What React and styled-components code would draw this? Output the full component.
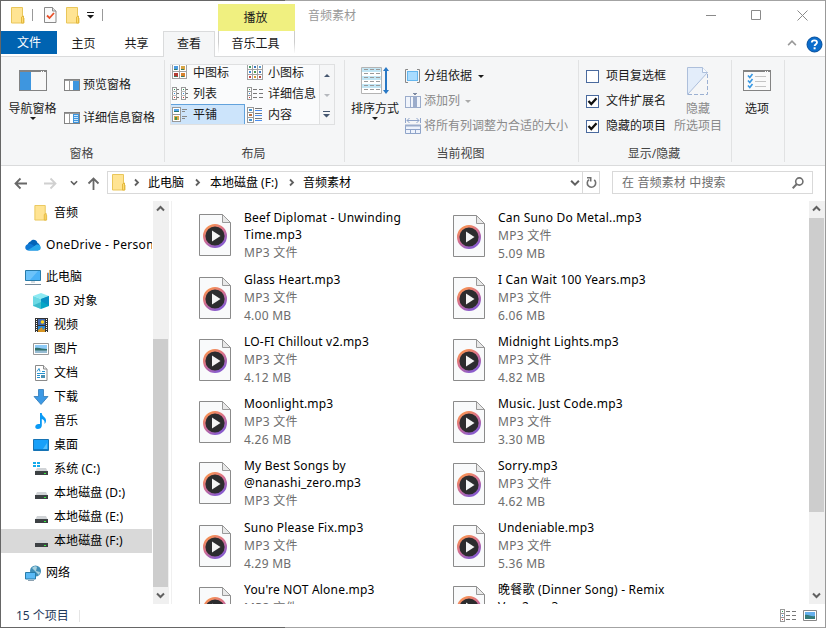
import React from 'react';
import styled, { createGlobalStyle } from 'styled-components';

const GlobalStyle = createGlobalStyle`
  * {
    box-sizing: border-box;
  }
  body {
    margin: 0;
    overflow: hidden;
    font-family: 'Noto Sans', 'Noto Sans CJK SC', sans-serif;
    font-size: 12px;
    line-height: 16px;
    color: #1a1a1a;
  }
  svg {
    display: block;
    flex: none;
  }
`;

const Window = styled.div`
  width: 826px;
  height: 628px;
  display: flex;
  flex-direction: column;
  padding: 1px 0;
  border: 1px solid #999;
  border-left-color: #666;
  border-width: 0 1px;
  background:
    linear-gradient(90deg, #666 284px, #a3a3a3 284px) top / 100% 1px no-repeat,
    linear-gradient(90deg, #666 284px, #a3a3a3 284px) bottom / 100% 1px no-repeat,
    #fff;
  white-space: nowrap;
`;

const TitleBar = styled.div`
  height: 30px;
  flex: none;
  display: flex;
`;

const QuickAccess = styled.div`
  width: 217px;
  height: 28px;
  padding-left: 10px;
  display: flex;
  align-items: center;
`;

const QuickSeparator = styled.div`
  width: 1px;
  height: 12px;
  margin: 0 ${props => props.$right || 0}px 0 7px;
  background: #999;
`;

const QuickItem = styled.div`
  margin-right: ${props => props.$right}px;
`;

const ContextTitle = styled.div`
  width: 77px;
  height: 27px;
  margin-top: 3px;
  padding-right: 2px;
  background: #f0f080;
  text-align: center;
  line-height: 27px;
`;

const Title = styled.div`
  flex: 1;
  padding-left: 13px;
  line-height: 29px;
  color: #999;
`;

const WindowButtons = styled.div`
  display: flex;
  align-items: flex-start;
  gap: 35px;
  padding: 9px 17px 0 0;
`;

const TabRow = styled.div`
  height: 26px;
  flex: none;
  display: flex;
  line-height: 25px;
  box-shadow: inset 0 -1px #dadbdc;
`;

const FileTab = styled.div`
  width: 56px;
  height: 23px;
  background: #0063b1;
  color: #fff;
  text-align: center;
  line-height: 24px;
`;

const Tab = styled.div`
  width: 53px;
  text-align: center;
`;

const ActiveTab = styled.div`
  width: 52px;
  border: 1px solid #dadbdc;
  border-bottom: 0;
  background: #f5f6f7;
  text-align: center;
  line-height: 24px;
`;

const ContextTab = styled.div`
  width: 77px;
  height: 22px;
  margin-left: 3px;
  padding-right: 2px;
  text-align: center;
  line-height: 25px;
  border: 1px solid;
  border-width: 0 1px;
  border-image: linear-gradient(#ccc, #ccc 50%, #fff) 1;
`;

const TabTools = styled.div`
  margin-left: auto;
  padding-right: 2px;
  display: flex;
  align-items: center;
  gap: 9px;
`;

const Ribbon = styled.div`
  height: 109px;
  flex: none;
  display: flex;
  background: #f5f6f7;
  border-bottom: 1px solid #dadbdc;
`;

const Group = styled.div`
  width: ${props => props.$width}px;
  height: 102px;
  margin-top: 3px;
  border-right: 1px solid #e1e2e3;
  display: flex;
  flex-direction: column;
`;

const GroupBody = styled.div`
  height: 85px;
  display: flex;
`;

const GroupLabel = styled.div`
  padding-right: 2px;
  text-align: center;
  line-height: 17px;
  color: #444;
`;

const BigButton = styled.div`
  width: ${props => props.$width}px;
  padding-top: ${props => props.$top}px;
  display: flex;
  flex-direction: column;
  align-items: center;
  text-align: center;
  color: ${props => (props.$disabled ? '#8a8a8a' : '#1a1a1a')};
`;

const BigLabel = styled.div`
  margin-top: ${props => props.$gap}px;
  line-height: 17px;
`;

const SmallButtons = styled.div`
  display: flex;
  flex-direction: column;
  padding: ${props => props.$padding};
  gap: ${props => props.$gap}px;
`;

const SmallButton = styled.div`
  height: 16px;
  display: flex;
  align-items: center;
  gap: ${props => props.$gap || 3}px;
  color: ${props => (props.$disabled ? '#8a8a8a' : '#1a1a1a')};
`;

const MenuMark = styled.span`
  margin-left: 2px;
`;

const CheckBox = styled.div`
  width: 13px;
  height: 13px;
  border: 1px solid #4a6a9e;
  background: #fff;
`;

const Gallery = styled.div`
  width: 165px;
  height: 61px;
  margin: 4px 0 0 5px;
  border: 1px solid #dfe0e1;
  background: #fafbfc;
  display: flex;
  overflow: hidden;
`;

const GalleryGrid = styled.div`
  width: 149px;
  margin-left: -1px;
  margin-bottom: -1px;
  display: grid;
  grid-template-columns: 75px 75px;
  grid-auto-rows: 21px;
  align-content: end;
`;

const GalleryItem = styled.div`
  display: flex;
  align-items: center;
  gap: 5px;
  padding-left: 1px;
  border: 1px solid ${props => (props.$selected ? '#62a2dc' : 'transparent')};
  background: ${props => (props.$selected ? '#cce4fb' : 'transparent')};
`;

const GalleryScroll = styled.div`
  flex: 1;
  border-left: 1px solid #dfe0e1;
  display: grid;
  grid-template-rows: 20px 20px 19px;
  place-items: center;
  background: #f5f6f7;
`;

const NavBar = styled.div`
  height: 35px;
  flex: none;
  display: flex;
  padding-top: 5px;
`;

const NavButtons = styled.div`
  width: 106px;
  height: 24px;
  padding-left: 13px;
  display: grid;
  grid-template-columns: 30px 26px 17px 13px;
  align-items: center;
`;

const AddressBar = styled.div`
  width: 493px;
  height: 23px;
  border: 1px solid #d9d9d9;
  display: flex;
  align-items: center;
  padding-left: 4px;
`;

const Crumb = styled.span`
  width: ${props => props.$width}px;
  color: #000;
`;

const CrumbArrow = styled.div`
  width: ${props => props.$width}px;
  padding-left: ${props => props.$left}px;
`;

const AddressTools = styled.div`
  margin-left: auto;
  height: 100%;
  display: flex;
  align-items: center;
`;

const Refresh = styled.div`
  width: 17px;
  height: 100%;
  margin-left: 2px;
  border-left: 1px solid #d9d9d9;
  display: flex;
  align-items: center;
  justify-content: center;
`;

const SearchBox = styled.div`
  width: 201px;
  height: 23px;
  margin-left: 12px;
  padding: 0 8px 0 9px;
  border: 1px solid #d9d9d9;
  display: flex;
  align-items: center;
  justify-content: space-between;
  color: #6d6d6d;
  letter-spacing: 0.15px;
`;

const Body = styled.div`
  height: 403px;
  flex: none;
  display: flex;
`;

const Sidebar = styled.div`
  width: 151px;
  margin-right: 1px;
  overflow: hidden;
`;

const SideItem = styled.div`
  height: 24px;
  margin-bottom: ${props => (props.$spaced ? 8 : 0)}px;
  padding-left: ${props => (props.$nested ? 32 : 24)}px;
  display: flex;
  align-items: center;
  gap: 5px;
  color: #000;
  letter-spacing: ${props => props.$spacing || 0}px;
  background: ${props => (props.$selected ? '#d9d9d9' : 'transparent')};
  svg {
    width: 16px;
    height: 16px;
  }
`;

const ScrollBar = styled.div`
  width: 16px;
  height: 403px;
  background: #f0f0f0;
  display: flex;
  flex-direction: column;
  flex: none;
`;

const ScrollButton = styled.div`
  height: 17px;
  padding-right: 1px;
  display: flex;
  align-items: center;
  justify-content: center;
`;

const ScrollTrack = styled.div`
  flex: 1;
  padding-top: ${props => props.$offset}px;
`;

const Thumb = styled.div`
  width: 15px;
  height: ${props => props.$height}px;
  background: #cdcdcd;
`;

const Files = styled.div`
  flex: 1;
  height: 403px;
  margin-left: 2px;
  padding: 8px 0 0 27px;
  border-left: 1px solid #f0f0f0;
  overflow: hidden;
  display: grid;
  grid-template-columns: 254px 254px;
  grid-auto-rows: 62px;
`;

const Tile = styled.div`
  display: flex;
  align-items: flex-start;
  svg {
    margin-top: ${props => (props.$wrapped ? 5 : 6)}px;
  }
`;

const TileText = styled.div`
  margin-left: 13px;
  height: 62px;
`;

const FileName = styled.div`
  line-height: 17px;
  margin-bottom: 1px;
  letter-spacing: 0.2px;
  color: #000;
`;

const FileMeta = styled.div`
  line-height: 18px;
  letter-spacing: 0.25px;
  color: #6d6d6d;
`;

const StatusBar = styled.div`
  flex: 1;
  display: flex;
  align-items: center;
  padding: 0 8px 0 15px;
  color: #1e395b;
`;

const StatusCount = styled.div`
  width: 64px;
  line-height: 12px;
  border-right: 1px solid #e5e5e5;
`;

const StatusViews = styled.div`
  margin-left: auto;
  display: flex;
  align-items: center;
  gap: 7px;
`;

const FolderIcon = () => (
  <svg width="14" height="17" viewBox="0 0 14 17">
    <path d="M.5.5h11v9.5l1.5 1v5H.5z" fill="#ffe493" stroke="#e9c65a" />
    <path d="M10.5 16V10l2-1v7z" fill="#ffdc72" stroke="#e3b93f" />
  </svg>
);

const PropertiesIcon = () => (
  <svg width="13" height="16" viewBox="0 0 13 16">
    <path d="M.5.5h8l3.500 3.500v11.500H.5z" fill="#fafafa" stroke="#8a8a8a" />
    <path d="M8.500.5V4H12" fill="#ddd" stroke="#8a8a8a" />
    <path d="M3 8.500l2.500 2.500 4.500-5" fill="none" stroke="#e8502a" strokeWidth="1.8" />
  </svg>
);

const DownArrow = ({ color = '#1a1a1a', up }) => (
  <svg width="6" height="3" viewBox="0 0 6 3">
    <path d={up ? 'M0 3h6L3 0z' : 'M0 0h6L3 3z'} fill={color} />
  </svg>
);

const MoreArrow = ({ color = '#1a1a1a' }) => (
  <svg width="8" height="7" viewBox="0 0 8 7">
    <path d="M0 0h7v1H0zM0 3h7L3.500 6.500z" fill={color} />
  </svg>
);

const CHEVRONS = {
  up: 'M1 5.500L4.500 2 8 5.500',
  down: 'M1 2.500L4.500 6 8 2.500',
  right: 'M3 1.500L6 4.500 3 7.500',
};

const Chevron = ({ dir, color = '#606060', width = 1.8, size = 9 }) => (
  <svg width={size} height={size} viewBox="0 0 9 9">
    <path d={CHEVRONS[dir]} fill="none" stroke={color} strokeWidth={width} />
  </svg>
);

const ARROWS = {
  left: 'M1.500 6.500H13M6.500 1.500l-5 5 5 5',
  right: 'M0 6.500h11.500M6.500 1.500l5 5-5 5',
  up: 'M6.500 13V1.500M1.500 6.500l5-5 5 5',
};

const Arrow = ({ dir, color = '#686868' }) => (
  <svg width="13" height="13" viewBox="0 0 13 13">
    <path d={ARROWS[dir]} fill="none" stroke={color} strokeWidth="1.8" />
  </svg>
);

const HelpIcon = () => (
  <svg width="17" height="17" viewBox="0 0 17 17">
    <circle cx="8.500" cy="8.500" r="7.500" fill="#0a6ccc" stroke="#064f9c" />
    <path d="M5.800 6.500C5.800 3.500 11 3.600 11 6.400c0 1.800-2.400 1.800-2.400 3.700" fill="none" stroke="#fff" strokeWidth="1.800" />
    <rect x="7.600" y="11.300" width="2" height="2" fill="#fff" />
  </svg>
);

const NavPaneIcon = () => (
  <svg width="28" height="21" viewBox="0 0 28 21">
    <rect x=".5" y=".5" width="27" height="20" fill="#f8f8f8" stroke="#838383" />
    <path d="M1 1h26v1H1z" fill="#838383" />
    <path d="M22 1h1v1h-1zM24 1h1v1h-1z" fill="#fff" />
    <rect x="1" y="2" width="11" height="18" fill="#3e96df" />
  </svg>
);

const PaneIcon = ({ lines }) => (
  <svg width="16" height="12" viewBox="0 0 16 12" shapeRendering="crispEdges">
    <rect x=".5" y=".5" width="15" height="11" fill="#fff" stroke="#838383" />
    <path d="M1 1h14v1H1zM5 2h1v9H5z" fill="#999" />
    <rect x="9" y="2" width="6" height="9" fill="#3e96df" />
    {lines && <path d="M10 3.500h4M10 5.500h4M10 7.500h4M10 9.500h4" stroke="#cbe6fc" />}
  </svg>
);

const PIC_COLORS = {
  2: ['#4b9be0', '#d8a545', '#b33a32', '#d8802c'],
  3: ['#3d9a65', '#3978bd', '#5a9bd0', '#3c8ad8', '#4a9b54', '#407ac0', '#c44', '#d69a33', '#b04a40'],
};

const ThumbGrid = ({ count, size }) => {
  const step = size / count;
  const picture = count === 2 ? 4 : 2;
  return (
    <svg width="16" height="15" viewBox="0 0 16 15" shapeRendering="crispEdges">
      {PIC_COLORS[count].map((color, i) => {
        const x = (i % count) * step;
        const y = Math.floor(i / count) * step - 1;
        return (
          <React.Fragment key={i}>
            <rect x={x + 0.5} y={y + 0.5} width={step} height={step} fill="#fff" stroke="#a2a2a2" />
            <rect x={x + 2} y={y + 2} width={picture} height={picture} fill={color} />
            {count === 2 && <rect x={x + 2} y={y + 5} width="3" height="1" fill="#397d62" />}
          </React.Fragment>
        );
      })}
    </svg>
  );
};

const ListIcon = () => (
  <svg width="16" height="14" viewBox="0 0 16 14" shapeRendering="crispEdges">
    <path d="M.5.5h4v12h-4zM9.500.5h4v12h-4z" fill="#fff" stroke="#999" />
    <path d="M0 4.500h5M0 8.500h5M9 4.500h5M9 8.500h5" stroke="#bbb" />
    <path d="M5 2.500h2M5 6.500h2M5 10.500h2M14 2.500h2M14 6.500h2M14 10.500h2" stroke="#777" />
    <path d="M2 2h1v1H2zM11 2h1v1h-1z" fill="#2d9a55" />
    <path d="M2 6h1v1H2zM11 6h1v1h-1z" fill="#338de0" />
    <path d="M2 10h1v1H2zM11 10h1v1h-1z" fill="#c33" />
  </svg>
);

const DetailsIcon = () => (
  <svg width="16" height="13" viewBox="0 0 16 13" shapeRendering="crispEdges">
    <path d="M.5.5h4v12h-4zM0 4.500h5M0 8.500h5" fill="#fff" stroke="#999" />
    <path d="M6 2.500h4M12 2.500h4M6 6.500h4M12 6.500h4M6 10.500h4M12 10.500h4" stroke="#777" />
    <path d="M2 2h1v1H2z" fill="#2d9a55" />
    <path d="M2 6h1v1H2z" fill="#338de0" />
    <path d="M2 10h1v1H2z" fill="#c33" />
  </svg>
);

const TilesIcon = () => (
  <svg width="16" height="15" viewBox="0 0 16 15" shapeRendering="crispEdges">
    <path d="M.5.5h8v14h-8zM0 7.500h9" fill="#fff" stroke="#999" />
    <path d="M2 2h5v2H2z" fill="#56a4e8" />
    <path d="M2 4h5v1H2z" fill="#257a70" />
    <path d="M2 9h5v4H2z" fill="#d7a94b" />
    <path d="M3 10h2v3H3z" fill="#47944b" />
    <path d="M10 2.500h5M10 4.500h3M10 9.500h5M10 11.500h3" stroke="#888" />
  </svg>
);

const ContentIcon = () => (
  <svg width="16" height="16" viewBox="0 0 16 16" shapeRendering="crispEdges">
    <path d="M.5.5h6v15h-6zM0 5.500h7M0 10.500h7" fill="#fff" stroke="#999" />
    <path d="M2 2h3v2H2zM2 12h3v2H2z" fill="#4794d0" />
    <path d="M2 7h3v2H2z" fill="#bb7040" />
    <path d="M8 1.500h7M8 6.500h7M8 11.500h7" stroke="#777" />
    <path d="M8 3.500h7M8 8.500h7M8 13.500h7" stroke="#4b8eed" />
  </svg>
);

const SortIcon = () => (
  <svg width="28" height="27" viewBox="0 0 28 27">
    <path d="M.5.5h20v26H.5z" fill="#fff" stroke="#b4b4b4" />
    <path d="M1 1h19v4H1zM1 9h19v4H1zM1 17h19v4H1z" fill="#c2e6f5" />
    <path d="M3 2.500h16M3 6.500h16M3 10.500h16M3 14.500h16M3 18.500h16M3 22.500h16" stroke="#9a9a9a" strokeDasharray="4 2" />
    <path d="M25 3v21" stroke="#2878c5" strokeWidth="2" />
    <path d="M22 4l3-4 3 4zM22 23l3 4 3-4z" fill="#2878c5" />
  </svg>
);

const GroupByIcon = () => (
  <svg width="15" height="15" viewBox="0 0 15 15">
    <path d="M3 .5H.5v13H3M12 .5h2.500v13H12" fill="none" stroke="#888" />
    <rect x="2.500" y="2.500" width="10" height="9" fill="#a9dcff" stroke="#65b6ed" />
  </svg>
);

const AddColumnIcon = () => (
  <svg width="16" height="16" viewBox="0 0 16 16" shapeRendering="crispEdges">
    <path d="M.5 3.500h15v11H.5zM5.500 3v12M10.500 3v12" fill="#f0f4fb" stroke="#9baccb" />
    <path d="M8 3h4v12H8z" fill="#9baccb" />
    <path d="M7 0h5L9.500 2.500z" fill="#7e8ba4" />
  </svg>
);

const FitColumnsIcon = () => (
  <svg width="16" height="16" viewBox="0 0 16 16">
    <path d="M.5 0v5M15.500 0v5M2 2.500h12M4.500 0L2 2.500 4.500 5M11.500 0L14 2.500 11.500 5" fill="none" stroke="#8fa4c9" />
    <path d="M.5 7.500h15v8H.5zM0 11.500h16M5.500 11v5M10.500 11v5" fill="#eef3fc" stroke="#8fa4c9" />
    <path d="M0 6.500h16v2H0z" fill="#9baccb" />
  </svg>
);

const CheckMark = () => (
  <svg width="11" height="11" viewBox="0 0 11 11">
    <path d="M1.500 5L4.300 8 9.500 2.300" fill="none" stroke="#111" strokeWidth="2.300" />
  </svg>
);

const HideIcon = () => (
  <svg width="22" height="29" viewBox="0 0 22 29">
    <path d="M.5.5h15l5 5L.5 27.500z" fill="#e3edfa" stroke="#adbfdb" />
    <path d="M15.500.5v5h5" fill="#f8fbff" stroke="#adbfdb" />
    <path d="M20.500 7v20.500H1" fill="none" stroke="#9bb0d2" strokeDasharray="4 2" />
  </svg>
);

const OptionsIcon = () => (
  <svg width="28" height="21" viewBox="0 0 28 21">
    <rect x=".5" y=".5" width="27" height="20" fill="#fafafa" stroke="#838383" />
    <path d="M1 1h26v1H1z" fill="#838383" />
    <path d="M22 1h1v1h-1zM24 1h1v1h-1z" fill="#fff" />
    <path d="M12 6.500h11M12 11.500h11M12 16.500h11" stroke="#c4c4c4" />
    <path d="M5 5.500l1.800 2L9.500 4M5 10.500l1.800 2L9.500 9M5 15.500l1.800 2L9.500 14" fill="none" stroke="#3998e2" strokeWidth="1.700" />
  </svg>
);

const RefreshIcon = () => (
  <svg width="11" height="13" viewBox="0 0 11 13">
    <path d="M3 3.600A4.200 4.200 0 1 0 8.200 3.800" fill="none" stroke="#707070" strokeWidth="1.600" />
    <path d="M1 1.800h3.700v3.700" fill="none" stroke="#707070" strokeWidth="1.600" />
  </svg>
);

const SearchIcon = () => (
  <svg width="12" height="12" viewBox="0 0 12 12">
    <circle cx="7.300" cy="4.500" r="3.600" fill="none" stroke="#707070" strokeWidth="1.600" />
    <path d="M4.800 7L.7 11.200" stroke="#707070" strokeWidth="2" />
  </svg>
);

const OneDriveIcon = () => (
  <svg viewBox="0 0 16 16">
    <path d="M2.500 9C2.500 6.500 4 5 5.500 4.500 7 2 11.500 2 12.500 6 14 6.500 15 8 15 9.500z" fill="#0364b8" />
    <path d="M3.500 13.500C-.8 13.500-.8 7.500 3.500 7c2-1 4 .5 5 1.500l5 5z" fill="#0f78d4" />
    <path d="M3 13l6.500-4c1-1.200 2.500-2 4-1.300 3.500 1.300 2.800 5.800-.7 5.800H4z" fill="#28a8ea" />
  </svg>
);

const ComputerIcon = () => (
  <svg viewBox="0 0 16 16">
    <path d="M.5 1.500h15v10H.5z" fill="#49b2f7" stroke="#287ba9" />
    <path d="M1 2h12L5 11H1z" fill="#83cffb" opacity=".6" />
    <path d="M6 12h4v2H6z" fill="#d5dce1" />
    <path d="M0 15.500h16" stroke="#74899a" />
  </svg>
);

const CubeIcon = () => (
  <svg viewBox="0 0 16 16">
    <path d="M0 3l8-3 8 3-8 3z" fill="#8deaf3" />
    <path d="M0 3l8 3v10l-8-3z" fill="#6bd9e4" />
    <path d="M16 3L8 6v10l8-3z" fill="#04a5c6" />
    <path d="M0 12.500L8 9v7z" fill="#3cbccc" />
    <path d="M16 12.500L8 8V6l8-3z" fill="#078fc4" />
  </svg>
);

const VideoIcon = () => (
  <svg viewBox="0 0 16 16">
    <path d="M2 1h13v14H2z" fill="#333" />
    <path d="M5 2h7v6H5z" fill="#4269ae" />
    <path d="M5 9h7v6H5z" fill="#2589da" />
    <path d="M3.500 2v13M13.500 2v13" stroke="#fff" strokeDasharray="1 1" />
    <circle cx="9.500" cy="5" r="1.800" fill="#ffd31e" />
    <path d="M5 15v-2l4-3 1 3 2-2v4z" fill="#d69423" />
  </svg>
);

const PictureIcon = () => (
  <svg viewBox="0 0 16 16">
    <path d="M.5 2.500h15v11H.5z" fill="#fff" stroke="#999" />
    <path d="M2 4h12v8H2z" fill="#8ecbf7" />
    <path d="M2 7c4-1 7 1 12 1v2H2z" fill="#32706b" />
    <path d="M2 9.500h12V12H2z" fill="#97bcd3" />
  </svg>
);

const DocumentIcon = () => (
  <svg viewBox="0 0 16 16">
    <path d="M2.500.5h8l3.500 3.500v11.500H2.500z" fill="#fff" stroke="#8a8a8a" />
    <path d="M10.500.5V4H14" fill="#eee" stroke="#8a8a8a" />
    <path d="M4 6.500l2-3 1 3M9 6.500h3M4 8.500h8M4 10.500h3M4 12.500h3" fill="none" stroke="#2792cf" />
    <path d="M8 10h4v3H8z" fill="#4a91b5" />
  </svg>
);

const DownloadIcon = () => (
  <svg viewBox="0 0 16 16">
    <path d="M5.500.5h5v7h4.500L8 15.500 1 7.500h4.500z" fill="#3c99e5" stroke="#2e79b6" strokeWidth=".8" />
  </svg>
);

const MusicIcon = () => (
  <svg viewBox="0 0 16 16">
    <path d="M7 0h1.800c0 3.500 4.200 3.800 4.200 7.500 0 1.500-.5 2.500-1.500 3.500.5-3.500-1-4.500-2.700-5v6.500C8.800 15 6.800 16 4.800 16 1 16 1.800 11 5.500 11H7z" fill="#0a9af5" />
  </svg>
);

const DesktopIcon = () => (
  <svg viewBox="0 0 16 16">
    <path d="M.5 2.500h15v11H.5z" fill="#18a0f9" stroke="#1673b4" />
    <path d="M10 12L14 6v6z" fill="#58bffa" />
    <path d="M1 12.500h14" stroke="#0c79c5" />
  </svg>
);

const DriveIcon = ({ system }) => (
  <svg viewBox="0 0 16 16">
    <path d="M4 7h9l2 4H2z" fill="#d0d3d6" />
    <rect x="2" y="10" width="13" height="4" fill="#3d4144" />
    <rect x="11" y="12" width="2" height="1" fill="#37f13e" />
    {system && <path d="M0 1h3v2H0zM4 1h3v2H4zM0 4h3v2H0zM4 4h3v2H4z" fill="#14abeb" />}
  </svg>
);

const NetworkIcon = () => (
  <svg viewBox="0 0 16 16">
    <circle cx="10.500" cy="6" r="5.500" fill="#408eb6" />
    <path d="M7 3c2-2 4-2 5-1l-1 4 4 1-1 3" fill="#a7d1df" />
    <path d="M.5 7.500h10v6.500H.5z" fill="#5abaf6" stroke="#287ca9" />
    <path d="M3 15.500h6" stroke="#8da2b1" />
  </svg>
);

const Mp3Icon = () => (
  <svg width="32" height="42" viewBox="0 0 32 42">
    <defs>
      <linearGradient id="ring" x1="0" y1="0" x2=".6" y2="1">
        <stop offset="0" stopColor="#ff9b45" />
        <stop offset=".5" stopColor="#d8718b" />
        <stop offset="1" stopColor="#8a5ccc" />
      </linearGradient>
    </defs>
    <path d="M.5.5h23l8 8v33H.5z" fill="#f9fafb" stroke="#8b8b8b" />
    <path d="M23.500.5v8h8z" fill="#e8e8e8" stroke="#999" />
    <circle cx="16" cy="22" r="10.800" fill="#2c2c2e" stroke="url(#ring)" strokeWidth="2.400" />
    <path d="M13 16.500v11l8.500-5.500z" fill="#f4f4f4" />
  </svg>
);

const SIDE_ITEMS = [
  { name: '音频', Icon: FolderIcon, nested: true, spaced: true },
  { name: 'OneDrive - Person', Icon: OneDriveIcon, spaced: true, spacing: 0.3 },
  { name: '此电脑', Icon: ComputerIcon },
  { name: '3D 对象', Icon: CubeIcon, nested: true, spacing: 0.2 },
  { name: '视频', Icon: VideoIcon, nested: true },
  { name: '图片', Icon: PictureIcon, nested: true },
  { name: '文档', Icon: DocumentIcon, nested: true },
  { name: '下载', Icon: DownloadIcon, nested: true },
  { name: '音乐', Icon: MusicIcon, nested: true },
  { name: '桌面', Icon: DesktopIcon, nested: true },
  { name: '系统 (C:)', Icon: DriveIcon, nested: true, system: true, spacing: 0.15 },
  { name: '本地磁盘 (D:)', Icon: DriveIcon, nested: true, spacing: 0.1 },
  { name: '本地磁盘 (E:)', Icon: DriveIcon, nested: true, spacing: 0.1 },
  { name: '本地磁盘 (F:)', Icon: DriveIcon, nested: true, selected: true, spaced: true, spacing: 0.1 },
  { name: '网络', Icon: NetworkIcon },
];

const FILES = [
  { name: ['Beef Diplomat - Unwinding', 'Time.mp3'] },
  { name: ['Can Suno Do Metal..mp3'], size: '5.09 MB' },
  { name: ['Glass Heart.mp3'], size: '4.00 MB' },
  { name: ['I Can Wait 100 Years.mp3'], size: '6.06 MB' },
  { name: ['LO-FI Chillout v2.mp3'], size: '4.12 MB' },
  { name: ['Midnight Lights.mp3'], size: '4.82 MB' },
  { name: ['Moonlight.mp3'], size: '4.26 MB' },
  { name: ['Music. Just Code.mp3'], size: '3.30 MB' },
  { name: ['My Best Songs by', '@nanashi_zero.mp3'] },
  { name: ['Sorry.mp3'], size: '4.62 MB' },
  { name: ['Suno Please Fix.mp3'], size: '4.29 MB' },
  { name: ['Undeniable.mp3'], size: '5.36 MB' },
  { name: ["You're NOT Alone.mp3"] },
  { name: ['晚餐歌 (Dinner Song) - Remix', 'Ver. 2.mp3'] },
];

const GALLERY = [
  { name: '中图标', icon: <ThumbGrid count={2} size={14} /> },
  { name: '小图标', icon: <ThumbGrid count={3} size={15} /> },
  { name: '列表', icon: <ListIcon /> },
  { name: '详细信息', icon: <DetailsIcon /> },
  { name: '平铺', icon: <TilesIcon />, selected: true },
  { name: '内容', icon: <ContentIcon /> },
];

function VerticalScroll({ offset, height }) {
  return (
    <ScrollBar>
      <ScrollButton>
        <Chevron dir="up" width={2} />
      </ScrollButton>
      <ScrollTrack $offset={offset}>
        <Thumb $height={height} />
      </ScrollTrack>
      <ScrollButton>
        <Chevron dir="down" width={2} />
      </ScrollButton>
    </ScrollBar>
  );
}

function Header() {
  return (
    <React.Fragment>
      <TitleBar>
        <QuickAccess>
          <FolderIcon />
          <QuickSeparator $right={11} />
          <QuickItem $right={9}>
            <PropertiesIcon />
          </QuickItem>
          <QuickItem $right={7}>
            <FolderIcon />
          </QuickItem>
          <MoreArrow />
          <QuickSeparator />
        </QuickAccess>
        <ContextTitle>播放</ContextTitle>
        <Title>音频素材</Title>
        <WindowButtons>
          <svg width="10" height="11" viewBox="0 0 10 11">
            <path d="M0 5.500h10" stroke="#8a8a8a" />
          </svg>
          <svg width="11" height="11" viewBox="0 0 11 11">
            <path d="M.5.5h9v9h-9z" fill="none" stroke="#8a8a8a" />
          </svg>
          <svg width="11" height="11" viewBox="0 0 11 11">
            <path d="M.5.5l10 10M10.500.5l-10 10" stroke="#8a8a8a" />
          </svg>
        </WindowButtons>
      </TitleBar>
      <TabRow>
        <FileTab>文件</FileTab>
        <Tab>主页</Tab>
        <Tab>共享</Tab>
        <ActiveTab>查看</ActiveTab>
        <ContextTab>音乐工具</ContextTab>
        <TabTools>
          <Chevron dir="up" color="#999" width={1.4} size={10} />
          <HelpIcon />
        </TabTools>
      </TabRow>
    </React.Fragment>
  );
}

function ViewRibbon() {
  return (
    <Ribbon>
      <Group $width={164}>
        <GroupBody>
          <BigButton $width={63} $top={10}>
            <NavPaneIcon />
            <BigLabel $gap={9}>导航窗格</BigLabel>
            <DownArrow />
          </BigButton>
          <SmallButtons $padding="17px 0 0 0" $gap={17}>
            <SmallButton>
              <PaneIcon />
              预览窗格
            </SmallButton>
            <SmallButton>
              <PaneIcon lines />
              详细信息窗格
            </SmallButton>
          </SmallButtons>
        </GroupBody>
        <GroupLabel>窗格</GroupLabel>
      </Group>
      <Group $width={180}>
        <GroupBody>
          <Gallery>
            <GalleryGrid>
              {GALLERY.map(item => (
                <GalleryItem key={item.name} $selected={item.selected}>
                  {item.icon}
                  {item.name}
                </GalleryItem>
              ))}
            </GalleryGrid>
            <GalleryScroll>
              <DownArrow up color="#45566f" />
              <DownArrow color="#b5b8bd" />
              <MoreArrow color="#45566f" />
            </GalleryScroll>
          </Gallery>
        </GroupBody>
        <GroupLabel>布局</GroupLabel>
      </Group>
      <Group $width={234}>
        <GroupBody>
          <BigButton $width={60} $top={7}>
            <SortIcon />
            <BigLabel $gap={6}>排序方式</BigLabel>
            <DownArrow />
          </BigButton>
          <SmallButtons $padding="8px 0 0" $gap={9}>
            <SmallButton $gap={4}>
              <GroupByIcon />
              分组依据
              <MenuMark>
                <DownArrow />
              </MenuMark>
            </SmallButton>
            <SmallButton $disabled>
              <AddColumnIcon />
              添加列
              <MenuMark>
                <DownArrow color="#aaa" />
              </MenuMark>
            </SmallButton>
            <SmallButton $disabled>
              <FitColumnsIcon />
              将所有列调整为合适的大小
            </SmallButton>
          </SmallButtons>
        </GroupBody>
        <GroupLabel>当前视图</GroupLabel>
      </Group>
      <Group $width={153}>
        <GroupBody>
          <SmallButtons $padding="8px 0 0 7px" $gap={9}>
            <SmallButton $gap={7}>
              <CheckBox />
              项目复选框
            </SmallButton>
            <SmallButton $gap={7}>
              <CheckBox>
                <CheckMark />
              </CheckBox>
              文件扩展名
            </SmallButton>
            <SmallButton $gap={7}>
              <CheckBox>
                <CheckMark />
              </CheckBox>
              隐藏的项目
            </SmallButton>
          </SmallButtons>
          <BigButton $width={64} $top={7} $disabled>
            <HideIcon />
            <BigLabel $gap={4}>
              隐藏
              <br />
              所选项目
            </BigLabel>
          </BigButton>
        </GroupBody>
        <GroupLabel>显示/隐藏</GroupLabel>
      </Group>
      <Group $width={53}>
        <BigButton $width={50} $top={10}>
          <OptionsIcon />
          <BigLabel $gap={9}>选项</BigLabel>
        </BigButton>
      </Group>
    </Ribbon>
  );
}

export default function App() {
  return (
    <Window>
      <GlobalStyle />
      <Header />
      <ViewRibbon />
      <NavBar>
        <NavButtons>
          <Arrow dir="left" />
          <Arrow dir="right" color="#d0d0d0" />
          <Chevron dir="down" size={8} />
          <Arrow dir="up" />
        </NavButtons>
        <AddressBar>
          <FolderIcon />
          <CrumbArrow $width={22} $left={6}>
            <Chevron dir="right" />
          </CrumbArrow>
          <Crumb $width={44}>此电脑</Crumb>
          <CrumbArrow $width={18} $left={1}>
            <Chevron dir="right" />
          </CrumbArrow>
          <Crumb $width={76}>本地磁盘 (F:)</Crumb>
          <CrumbArrow $width={17} $left={1}>
            <Chevron dir="right" />
          </CrumbArrow>
          <Crumb>音频素材</Crumb>
          <AddressTools>
            <Chevron dir="down" size={10} />
            <Refresh>
              <RefreshIcon />
            </Refresh>
          </AddressTools>
        </AddressBar>
        <SearchBox>
          在 音频素材 中搜索
          <SearchIcon />
        </SearchBox>
      </NavBar>
      <Body>
        <Sidebar>
          {SIDE_ITEMS.map(({ name, Icon, nested, spaced, selected, spacing, system }) => (
            <SideItem key={name} $nested={nested} $spaced={spaced} $selected={selected} $spacing={spacing}>
              <Icon system={system} />
              {name}
            </SideItem>
          ))}
        </Sidebar>
        <VerticalScroll offset={121} height={248} />
        <Files>
          {FILES.map(({ name, size }) => (
            <Tile key={name[0]} $wrapped={name.length > 1}>
              <Mp3Icon />
              <TileText>
                <FileName>
                  {name.map(line => (
                    <div key={line}>{line}</div>
                  ))}
                </FileName>
                <FileMeta>MP3 文件</FileMeta>
                {size && <FileMeta>{size}</FileMeta>}
              </TileText>
            </Tile>
          ))}
        </Files>
        <VerticalScroll offset={0} height={294} />
      </Body>
      <StatusBar>
        <StatusCount>15 个项目</StatusCount>
        <StatusViews>
          <DetailsIcon />
          <svg width="14" height="11" viewBox="0 0 14 11">
            <path d="M.5.5h13v10H.5z" fill="#fff" stroke="#888" />
            <path d="M2 2h10v7H2z" fill="#66b0ed" />
            <path d="M2 5c3-1 6 2 10 1v3H2z" fill="#347a79" />
          </svg>
        </StatusViews>
      </StatusBar>
    </Window>
  );
}
